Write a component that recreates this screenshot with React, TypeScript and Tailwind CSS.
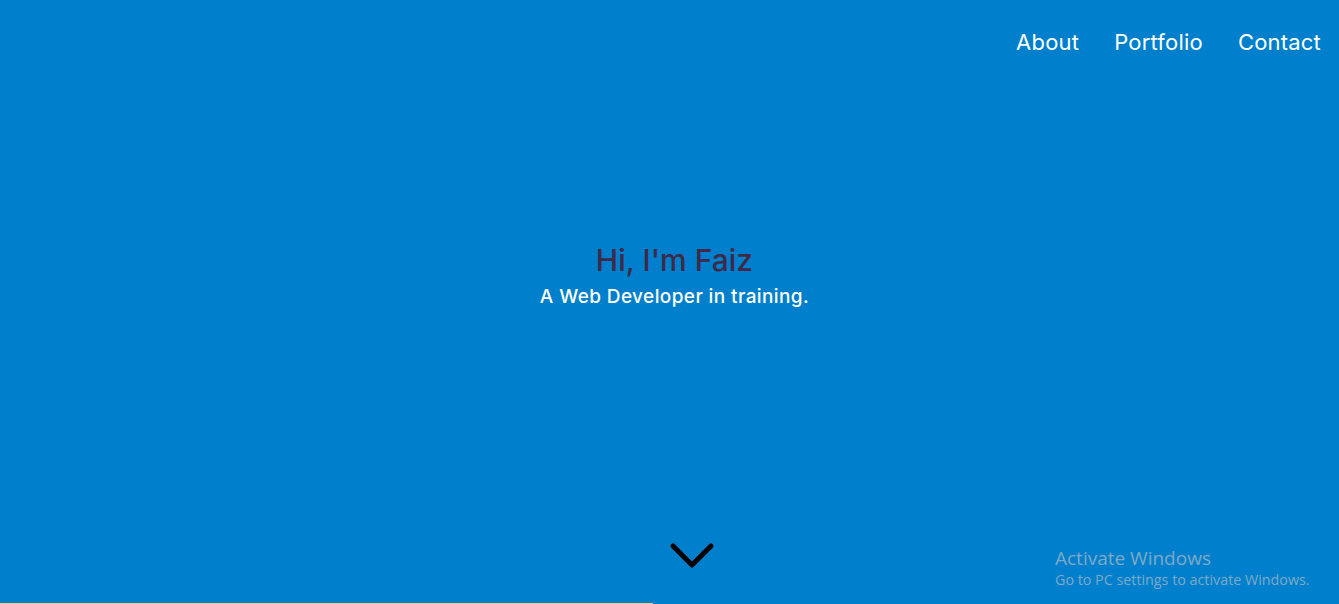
const links = ["About", "Portfolio", "Contact"];

const App = () => {
  return (
    <div className="relative flex h-[604px] w-full flex-col overflow-hidden bg-[#0080cc] font-['Inter',sans-serif]">
      <nav className="flex justify-end gap-[35px] pr-[18px] pt-[27px]">
        {links.map((l) => (
          <a key={l} href="#" className="text-[22px] leading-[30px] tracking-[0.2px] text-white">
            {l}
          </a>
        ))}
      </nav>

      <header className="ml-[10px] mt-[184px] flex flex-col items-center">
        <h1 className="text-[30px] leading-[38px] font-medium text-[#3e2a48]">Hi, I'm Faiz</h1>
        <p className="mt-[5px] text-[19px] leading-[26px] font-medium tracking-[0.4px] text-white">
          A Web Developer in training.
        </p>
      </header>

      <div className="mt-auto mb-[34px] ml-[44px] flex justify-center">
        <svg width="46" height="28" viewBox="0 0 46 28" fill="none">
          <path d="M4 4l19 19L42 4" stroke="#000" strokeWidth="5" strokeLinecap="round" strokeLinejoin="round" />
        </svg>
      </div>

      {/* scroll progress */}
      <div className="absolute bottom-0 left-0 h-px w-[653px] bg-[#f2c27e]" />

      <div className="absolute left-[1055px] top-[545px] font-['Open_Sans',sans-serif] text-[#7fa9c6]">
        <div className="text-[19px] leading-[26px]">Activate Windows</div>
        <div className="text-[14.3px] leading-[18px]">Go to PC settings to activate Windows.</div>
      </div>
    </div>
  );
};

export default App;
